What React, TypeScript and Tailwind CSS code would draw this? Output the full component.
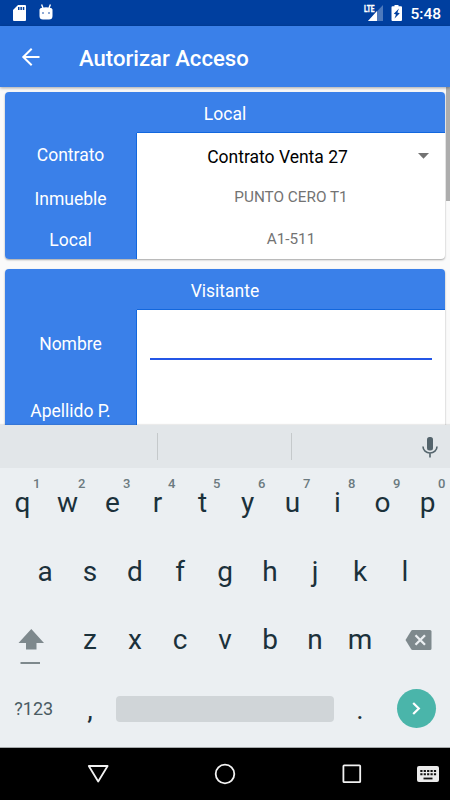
import React from 'react';

const TOP_KEYS = ['q', 'w', 'e', 'r', 't', 'y', 'u', 'i', 'o', 'p'];
const HOME_KEYS = ['a', 's', 'd', 'f', 'g', 'h', 'j', 'k', 'l'];
const BOTTOM_KEYS = ['z', 'x', 'c', 'v', 'b', 'n', 'm'];

function StatusBar() {
  return (
    <div className="flex h-[26px] shrink-0 items-center justify-between bg-[#003f9f] pr-[9px] pl-[13px]">
      <div className="flex items-center gap-[13px]">
        <svg className="h-4 w-[13px]" viewBox="0 0 13 16">
          <path d="M5 0h7a1 1 0 0 1 1 1v14a1 1 0 0 1-1 1H1a1 1 0 0 1-1-1V5z" fill="#fff" />
          <path d="M5 2h1.5v3H5zM7.4 2h1.5v3H7.4zM9.8 2h1.5v3H9.8z" fill="#003f9f" />
        </svg>
        <svg className="mb-[2px] h-4 w-[14px]" viewBox="0 0 14 16">
          <path d="M2.600 .5 4 4M11.400 .5 10 4" stroke="#fff" strokeWidth="1.400" />
          <path d="M.5 5.500Q1 4 3 3.700q4-1 8 0 2 .3 2.500 1.800v6.500q0 3.500-3.500 3.500H4q-3.500 0-3.500-3.500z" fill="#fff" />
          <circle cx="4" cy="9" r=".8" fill="#003f9f" />
          <circle cx="10" cy="9" r=".8" fill="#003f9f" />
        </svg>
      </div>
      <div className="flex items-center">
        <svg className="h-[18px] w-5" viewBox="0 0 20 18">
          <path d="M20 1v16H5z" fill="#4d79bc" />
          <path d="M14 7v10H5z" fill="#fff" />
          <text x="1" y="8" fontSize="9.500" fontWeight="700" fill="#fff" stroke="#fff" strokeWidth=".4" textLength="10.500" lengthAdjust="spacingAndGlyphs" fontFamily="Roboto">LTE</text>
        </svg>
        <svg className="ml-2 h-[18px] w-3" viewBox="0 0 12 18">
          <path d="M3.500 1h4v1.200H10a1 1 0 0 1 1 1V16a1 1 0 0 1-1 1H1.500a1 1 0 0 1-1-1V3.200a1 1 0 0 1 1-1h2z" fill="#fff" />
          <path d="M8 4.500 2.800 9.800l2.200.7-1.500 4L8.800 9.200l-2.400-.8z" fill="#003f9f" />
        </svg>
        <span className="mt-[3px] ml-[7px] text-[15.5px] leading-none font-medium text-white">5:48</span>
      </div>
    </div>
  );
}

function AppBar() {
  return (
    <div className="relative z-10 flex h-[61px] shrink-0 items-center bg-[#3a80e9] pl-[21px] shadow-[0_1px_3px_rgba(0,0,0,0.35)]">
      <svg className="h-5 w-5" viewBox="0 0 20 20" fill="none" stroke="#fff" strokeWidth="2">
        <path d="M18.500 10H2.500M10.700 1.800 2.300 10l8.400 8.200" />
      </svg>
      <h1 className="mt-[4px] ml-[38px] text-[22.1px] leading-none font-medium text-white">Autorizar Acceso</h1>
    </div>
  );
}

function Card({ title, labels, children }: { title: string; labels: React.ReactNode; children: React.ReactNode }) {
  return (
    <section className="shrink-0 overflow-hidden rounded-[4px] bg-white shadow-[0_1px_2px_rgba(0,0,0,0.35)]">
      <h2 className="flex h-[41px] items-center justify-center bg-[#3a80e9] pt-[3px] text-[17.5px] text-white">
        {title}
      </h2>
      <div className="flex">
        <div className="flex w-[132px] flex-col border-r border-[#1267de] bg-[#3a80e9] text-center text-[17.5px] text-white">
          {labels}
        </div>
        <div className="-mt-px flex flex-1 flex-col border-t border-[#1267de]">{children}</div>
      </div>
    </section>
  );
}

function Form() {
  return (
    <main className="flex h-[338px] shrink-0 overflow-hidden bg-[#fafafa] pt-[5px] pl-[5px]">
      <div className="flex w-[440px] flex-col gap-[10px]">
        <Card
          title="Local"
          labels={
            <>
              <span className="h-[43px] leading-[44px]">Contrato</span>
              <span className="h-[42px] leading-[47px]">Inmueble</span>
              <span className="h-[41px] leading-[45px]">Local</span>
            </>
          }
        >
          <div className="flex h-[43px] items-center pr-4 text-[17.5px] text-black">
            <span className="flex-1 pt-[5px] text-center">Contrato Venta 27</span>
            <svg className="mt-[2px] h-[6px] w-[11px]" viewBox="0 0 11 6">
              <path d="M0 0h11L5.500 5.700z" fill="#737373" />
            </svg>
          </div>
          <span className="h-[42px] text-center text-[15.3px] leading-[43px] text-[#737373]">PUNTO CERO T1</span>
          <span className="h-[41px] text-center text-[15.3px] leading-[42px] text-[#737373]">A1-511</span>
        </Card>
        <Card
          title="Visitante"
          labels={
            <>
              <span className="h-[67px] leading-[68px]">Nombre</span>
              <span className="h-[67px] leading-[68px]">Apellido P.</span>
            </>
          }
        >
          <div className="px-[13px] pt-[10px]">
            <input className="block h-10 w-full border-b-2 border-[#2456e6] bg-transparent text-[18px] outline-none" />
          </div>
        </Card>
      </div>
      <div className="-mt-[5px] ml-[1px] h-[114px] w-1 bg-[#adadad]" />
    </main>
  );
}

function SuggestionStrip() {
  return (
    <div className="relative flex h-[43px] shrink-0 items-center bg-[#e2e6e9] shadow-[0_-1px_1px_rgba(0,0,0,0.08)]">
      <div className="h-[27px] w-[158px] border-r border-[#c5c9cb]" />
      <div className="h-[27px] w-[134px] border-r border-[#c5c9cb]" />
      <svg className="ml-[130px] h-[22px] w-4" viewBox="0 0 16 22">
        <rect x="5" y="1" width="6" height="13.500" rx="2.500" fill="#54646c" />
        <path d="M1 10.500a7 6.500 0 0 0 14 0M8 17v4.500" fill="none" stroke="#54646c" strokeWidth="1.600" />
      </svg>
    </div>
  );
}

function Key({ label, hint }: { label: string; hint?: string }) {
  return (
    <button className="relative flex w-[45px] items-center justify-center pt-[2px] text-[28px] leading-none text-[#1b313b]">
      {label}
      {hint && (
        <span className="absolute top-[9px] left-[33px] text-[13px] leading-none font-medium text-[#6c7a80]">{hint}</span>
      )}
    </button>
  );
}

function Keyboard() {
  return (
    <div className="grid h-[280px] shrink-0 grid-rows-4 border-b border-[#a5a9ab] bg-[#ebeff2] pb-1">
      <div className="flex">
        {TOP_KEYS.map((k, i) => (
          <Key key={k} label={k} hint={String((i + 1) % 10)} />
        ))}
      </div>
      <div className="flex justify-center">
        {HOME_KEYS.map((k) => (
          <Key key={k} label={k} />
        ))}
      </div>
      <div className="flex">
        <button className="flex w-[67.5px] items-center pt-[14px] pl-[18px]">
          <svg className="h-[36px] w-[27px]" viewBox="0 0 27 36">
            <path d="M13.300 0 26 14h-7.500v6.500H8V14H.500z" fill="#7e898d" />
            <path d="M2.500 33h19.500v2H2.500z" fill="#7e898d" />
          </svg>
        </button>
        <div className="flex pb-[2px]">
          {BOTTOM_KEYS.map((k) => (
            <Key key={k} label={k} />
          ))}
        </div>
        <button className="flex w-[67.5px] items-center justify-center pl-1">
          <svg className="h-5 w-[27px]" viewBox="0 0 27 20">
            <path d="M7.500 0H25q1.500 0 1.500 1.500v17q0 1.500-1.500 1.500H7.500q-.8 0-1.300-.7L.500 10 6.200.7Q6.700 0 7.500 0z" fill="#7e898d" />
            <path d="m10.500 5.200 9.500 9.500m0-9.500-9.500 9.500" stroke="#ebeff2" strokeWidth="2.300" />
          </svg>
        </button>
      </div>
      <div className="flex items-center">
        <button className="w-[67.5px] text-center text-[18px] text-[#4a5b63]">?123</button>
        <Key label="," />
        <div className="mr-[4px] ml-[3.5px] h-[26px] w-[217.5px] rounded-[4px] bg-[#d0d5d8]" />
        <Key label="." />
        <div className="flex w-[67.5px] justify-center">
          <button className="flex h-[39px] w-[39px] items-center justify-center rounded-full bg-[#4ab5aa]">
            <svg className="h-[13px] w-[9px]" viewBox="0 0 9 13">
              <path d="m1.200 1 5.600 5.500L1.200 12" fill="none" stroke="#fff" strokeWidth="2.200" />
            </svg>
          </button>
        </div>
      </div>
    </div>
  );
}

function NavBar() {
  return (
    <div className="flex h-[52px] shrink-0 items-center bg-black pl-[87px]">
      <svg className="h-[22px] w-[22px]" viewBox="0 0 22 22" fill="none" stroke="#f2f2f2" strokeWidth="1.800" strokeLinejoin="round">
        <path d="M1.800 3h18.800L11.200 18.500z" />
      </svg>
      <svg className="ml-[105px] h-[22px] w-[22px]" viewBox="0 0 22 22">
        <circle cx="11" cy="11" r="9.300" fill="none" stroke="#f2f2f2" strokeWidth="1.800" />
      </svg>
      <svg className="ml-[105px] h-[22px] w-[22px]" viewBox="0 0 22 22">
        <rect x="2.400" y="2.400" width="16.800" height="16.800" rx=".8" fill="none" stroke="#f2f2f2" strokeWidth="1.800" />
      </svg>
      <svg className="ml-[54px] h-4 w-[22px]" viewBox="0 0 22 16">
        <rect width="22" height="16" rx="2" fill="#ebebeb" />
        <path d="M3.300 5h15.800M3.300 8.300h15.800" stroke="#111" strokeWidth="2" strokeDasharray="2.200 1.200" />
        <path d="M6.500 12.500h9" stroke="#111" strokeWidth="1.800" />
      </svg>
    </div>
  );
}

export default function App() {
  return (
    <div className="flex h-[800px] w-[450px] flex-col overflow-hidden bg-black font-['Roboto',sans-serif]">
      <StatusBar />
      <AppBar />
      <Form />
      <SuggestionStrip />
      <Keyboard />
      <NavBar />
    </div>
  );
}
